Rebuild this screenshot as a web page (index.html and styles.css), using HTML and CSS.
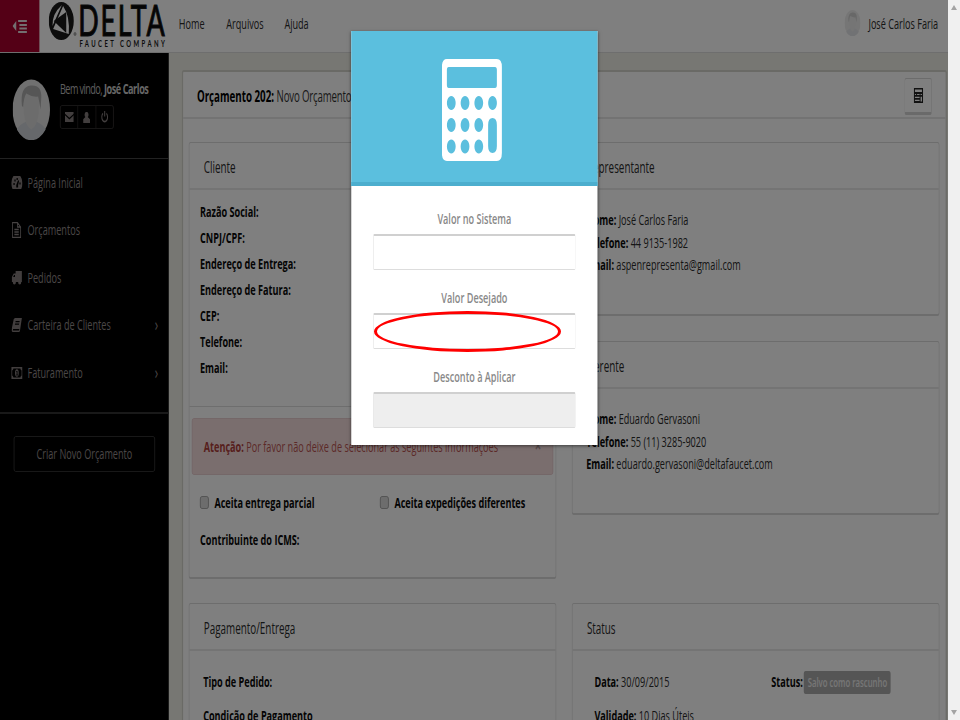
FILE: index.html
```html
<!DOCTYPE html>
<html lang="pt-BR">
<head>
<meta charset="utf-8">
<title>Orçamento 202</title>
<link rel="stylesheet" href="styles.css">
</head>
<body>
<svg class="defs" width="0" height="0">
  <symbol id="person" viewBox="0 0 60 60">
    <circle cx="30" cy="30" r="30" fill="#e0e0e0"/>
    <path d="M7 50q4-5 15-8v-5h16v5q11 3 15 8a30 30 0 0 1-46 0z" fill="#cdd0d6"/>
    <path d="M17 17Q30 8 43 17l-1 17q-3 13-12 16-9-3-12-16z" fill="#d9d9d9"/>
    <path d="M15 26Q12 7 29 6q18-1 17 12l-1 12q-2-7-4-13-9 1-19-3-4 4-5 14z" fill="#adadad"/>
  </symbol>
  <symbol id="calc" viewBox="0 0 96 102">
    <path fill-rule="evenodd" d="M8 0H88Q96 0 96 8V94Q96 102 88 102H8Q0 102 0 94V8Q0 0 8 0zM11 8Q8 8 8 11V26Q8 29 11 29H85Q88 29 88 26V11Q88 8 85 8z
      M15 37a7 7 0 1 0 .1 0z M37 37a7 7 0 1 0 .1 0z M59 37a7 7 0 1 0 .1 0z M81 37a7 7 0 1 0 .1 0z
      M15 59a7 7 0 1 0 .1 0z M37 59a7 7 0 1 0 .1 0z M59 59a7 7 0 1 0 .1 0z
      M15 80.500a7 7 0 1 0 .1 0z M37 80.500a7 7 0 1 0 .1 0z M59 80.500a7 7 0 1 0 .1 0z
      M81 59q-7 0-7 7V87q0 7 7 7t7-7V66q0-7-7-7z" fill="currentColor"/>
  </symbol>
</svg>
<div class="viewport">
<div class="stage">
  <header class="topbar">
    <div class="toggle"><svg width="24" height="14" viewBox="0 0 24 14"><path d="M6 2v10L0 7z M9 1h14v2H9z M11 5h12v2H11z M11 8.500h12v2H11z M9 12h14v2H9z" fill="#e6dfe1"/></svg></div>
    <div class="brand">
      <svg class="mark" width="46" height="40" viewBox="0 0 46 40"><ellipse cx="20" cy="19" rx="20" ry="19" fill="#181818"/><path d="M21 3L6 24Q5 12 21 3z M23 4Q34 14 32 32L7 27z" fill="#fff"/><path d="M8 19L28 10V31z" fill="#181818"/><circle cx="42" cy="32" r="1.500" fill="none" stroke="#333" stroke-width=".7"/></svg>
      <div class="wordmark"><b>DELTA</b><span>FAUCET COMPANY</span></div>
    </div>
    <nav class="menu"><a class="m1">Home</a><a class="m2">Arquivos</a><a>Ajuda</a></nav>
    <div class="account"><svg width="26" height="26" viewBox="0 0 60 60"><use href="#person" width="60" height="60"/></svg><span>José Carlos Faria</span></div>
  </header>
  <div class="columns">
    <aside class="sidebar">
      <div class="profile">
        <svg class="avatar" width="60" height="61" preserveAspectRatio="none"><use href="#person"/></svg>
        <div class="hello">
          <p>Bem vindo, <b>José Carlos</b></p>
          <div class="tools">
            <span><svg width="14" height="10" viewBox="0 0 14 12" preserveAspectRatio="none"><path d="M0 0h14v2L7 7 0 2z M0 4l7 5 7-5v8H0z"/></svg></span>
            <span><svg width="11" height="11" viewBox="0 0 12 12"><path d="M6 0a3 3 0 0 1 2 5.500L12 8v4H0V8l4-2.500A3 3 0 0 1 6 0z"/></svg></span>
            <span><svg width="13" height="12" viewBox="0 0 14 13"><path d="M4 2.500a5 5 0 1 0 6 0M7 0v6" fill="none" stroke="#847c7c" stroke-width="1.800"/></svg></span>
          </div>
        </div>
      </div>
      <ul class="nav">
        <li><svg width="18" height="13" viewBox="0 0 18 13"><path fill-rule="evenodd" d="M2 13A9 9 0 1 1 16 13z M3.500 7v2h2V7z M5 3.500v2h2v-2z M8.500 2v2h2V2z M13 6.500v2h2v-2z M11 4L8 9v2.500h3V9l1.500-4z"/></svg><span>Página Inicial</span></li>
        <li><svg width="18" height="16" viewBox="0 0 18 16"><path d="M2 .7h8l5 4.300v10.300H2z M10 1v4h5 M5 7.500h7M5 10h7M5 12.500h7" fill="none" stroke="#8c8585" stroke-width="1.300"/></svg><span>Orçamentos</span></li>
        <li><svg width="18" height="14" viewBox="0 0 18 14"><path fill-rule="evenodd" d="M7 0h10v11h-1a2.500 2.500 0 0 1-5 0H7.500a2.500 2.500 0 0 1-5 0H1V6l3-3.500h3z M3 6h3V4H4.500z"/></svg><span>Pedidos</span></li>
        <li><svg width="18" height="14" viewBox="0 0 18 14"><path fill-rule="evenodd" d="M6 0h11l-3 12.500L13 14H2Q0 13 1 10L4 1z M7 3l-.4 1.200h6.500l.4-1.200z M6.200 5.500l-.4 1.200h6.500l.4-1.200z M3 11l-.5 1.500h10L13 11z"/></svg><span>Carteira de Clientes</span><i>›</i></li>
        <li><svg width="18" height="12" viewBox="0 0 18 12"><path fill-rule="evenodd" d="M0 0h18v12H0z M3.500 1.500Q3 3 1.500 3.500v5Q3 9 3.500 10.500h11Q15 9 16.500 8.500v-5Q15 3 14.500 1.500z M9 2.300q3 0 3 3.700t-3 3.700-3-3.700 3-3.700z M8 4v1h.6v2.500H8v1h2.600v-1H10V4z"/></svg><span>Faturamento</span><i>›</i></li>
      </ul>
      <div class="create"><a>Criar Novo Orçamento</a></div>
    </aside>
    <main class="content">
      <section class="sheet">
        <div class="sheet-head"><h1>Orçamento 202: <small>Novo Orçamento</small></h1><a class="calc-btn"><svg width="15" height="15" viewBox="0 0 96 102" preserveAspectRatio="none"><path fill-rule="evenodd" d="M0 0H96V102H0z M12 10V28H84V10z M12 40V48H24V40z M34 40V48H60V40z M70 40V48H84V40z M12 60V68H60V60z M70 60V92H84V60z M12 80V88H60V80z" fill="#222"/></svg></a></div>
        <div class="grid">
          <div class="col">
            <article class="card client">
              <h2>Cliente</h2>
              <dl><dt>Razão Social:</dt><dt>CNPJ/CPF:</dt><dt>Endereço de Entrega:</dt><dt>Endereço de Fatura:</dt><dt>CEP:</dt><dt>Telefone:</dt><dt>Email:</dt></dl>
              <div class="extra">
                <div class="alert"><p><b>Atenção:</b> Por favor não deixe de selecionar as seguintes informações</p><em>×</em></div>
                <div class="checks"><label><s></s>Aceita entrega parcial</label><label><s></s>Aceita expedições diferentes</label></div>
                <p class="icms">Contribuinte do ICMS:</p>
              </div>
            </article>
            <article class="card pay"><h2>Pagamento/Entrega</h2><div class="rows"><p><b>Tipo de Pedido:</b></p><p><b>Condição de Pagamento</b></p></div></article>
          </div>
          <div class="col">
            <article class="card rep"><h2>Representante</h2><div class="info"><p><b>Nome:</b> José Carlos Faria</p><p><b>Telefone:</b> 44 9135-1982</p><p><b>Email:</b> aspenrepresenta@gmail.com</p></div></article>
            <article class="card rep second"><h2>Gerente</h2><div class="info"><p><b>Nome:</b> Eduardo Gervasoni</p><p><b>Telefone:</b> 55 (11) 3285-9020</p><p><b>Email:</b> eduardo.gervasoni@deltafaucet.com</p></div></article>
            <article class="card pay state"><h2>Status</h2><div class="rows status"><p class="split"><span><b>Data:</b> 30/09/2015</span><span><b>Status:</b> <mark>Salvo como rascunho</mark></span></p><p><b>Validade:</b> 10 Dias Úteis</p></div></article>
          </div>
        </div>
      </section>
    </main>
  </div>
  <div class="shade"></div>
  <div class="modal">
    <div class="modal-head"><svg width="96" height="102"><use href="#calc"/></svg></div>
    <form class="fields">
      <label><span>Valor no Sistema</span><input></label>
      <label><span>Valor Desejado</span><input></label>
      <label><span>Desconto à Aplicar</span><input disabled></label>
    </form>
  </div>
</div>
<div class="scroll"><b class="up"></b><b class="down"></b></div>
<div class="ring"></div>
</div>
</body>
</html>
```
FILE: styles.css
```css
* { box-sizing: border-box; margin: 0; padding: 0; }
body { font-family: "Open Sans", "Noto Sans", sans-serif; background: #808080; overflow: hidden; }
.defs { position: absolute; }
.viewport { position: relative; width: 960px; height: 720px; overflow: hidden; }

.stage { position: relative; width: 1517px; height: 720px; overflow: hidden; transform: scaleX(.625); transform-origin: 0 0; background: #efefe6; color: #2a2a2a; font-size: 14.6px; white-space: nowrap; }

.topbar { display: flex; height: 53px; background: #fff; border-bottom: 1px solid #dcdcdc; }
.toggle { width: 63px; height: 52px; background: #a8002c; display: flex; align-items: center; justify-content: center; }
.brand { display: flex; width: 223px; padding: 2px 0 0 15px; }
.mark { flex: none; }
.wordmark { display: flex; flex-direction: column; margin-left: 1px; margin-top: -3px; color: #181818; width: 150px; }
.wordmark b { height: 39px; font: 400 43px/42px Lato, sans-serif; -webkit-text-stroke: 1.200px #181818; letter-spacing: 2.900px; }
.wordmark span { font: 700 9.500px/11px Lato, sans-serif; letter-spacing: 3.900px; margin-left: 2px; }
.menu { display: flex; line-height: 47px; }
.m1 { width: 76px; }
.m2 { width: 93px; }
.account { margin-left: auto; display: flex; align-items: center; height: 46px; padding-right: 16px; gap: 12px; }
.account svg { opacity: .55; }

.columns { display: flex; }
.sidebar { width: 270px; height: 667px; background: #000; color: #958d8d; }
.profile { display: flex; height: 106px; padding: 26px 0 0 20px; border-bottom: 1px solid #444; }
.hello { padding-left: 16px; }
.hello p { line-height: 19px; color: #bbb; letter-spacing: -.9px; }
.hello b { color: #ccc; letter-spacing: -.7px; }
.tools { display: flex; margin-top: 7px; width: 86px; height: 24px; border: 1px solid #383434; border-radius: 3px; }
.tools span { flex: 1; display: flex; align-items: center; justify-content: center; border-right: 1px solid #383434; }
.tools span:last-child { border: 0; }
.tools path, .nav path { fill: #847c7c; }
.tools span:last-child path, .nav li:nth-child(2) path { fill: none; }
.nav { height: 255px; list-style: none; border-bottom: 2px solid #333; }
.nav li { display: flex; align-items: center; height: 47.500px; padding: 0 17px 0 18px; gap: 8px; }
.nav span { padding-bottom: 2px; }
.nav i { margin-left: auto; font-style: normal; font-size: 18px; line-height: 20px; padding-bottom: 2px; }
.create { padding: 22px 22px; }
.create a { display: block; width: 226px; height: 36px; line-height: 32px; border: 1px solid #3b3b3b; border-radius: 3px; text-align: center; }

.content { padding: 17px 0 0 21px; }
.sheet { width: 1224px; height: 700px; background: #fff; border: 2px solid #d4d4cc; border-radius: 3px 3px 0 0; }
.sheet-head { display: flex; height: 47px; padding: 6px 22px; justify-content: space-between; border-bottom: 2px solid #e6e6e6; }
h1 { font-size: 15.600px; line-height: 36px; color: #000; font-weight: 700; }
h1 small { font-size: 15.500px; font-weight: 400; color: #333; letter-spacing: -.3px; }
.calc-btn { display: flex; width: 44px; height: 37px; align-items: center; justify-content: center; padding-bottom: 1px; border: 1px solid #d8d8d8; border-bottom: 3px solid #d4d4d4; border-radius: 3px; }
.grid { display: flex; gap: 25px; padding: 23px 0 0 9px; }
.col { width: 588px; }
.card { border: solid #dadada; border-width: 1px 1.600px 2px; border-bottom-color: #dadada; border-radius: 3px; background: #fff; }
h2 { height: 47px; padding-left: 23px; font-size: 15.800px; line-height: 49px; font-weight: 400; border-bottom: 2px solid #e8e8e8; }
b, dt, .checks, .icms { font-weight: 700; color: #080808; }
.client { height: 437px; }
dl { height: 217px; padding: 8px 17px; border-bottom: 1px solid #ddd; line-height: 26px; }
.extra { padding: 11px 4px; }
.alert { display: flex; justify-content: space-between; height: 57px; padding: 0 18px; border: 1px solid #e5c6ca; border-radius: 3px; background: #f5dddd; color: #b95350; line-height: 55px; }
.alert b { color: #ad3c39; }
.alert em { font: 700 18px/52px "Open Sans"; color: #b09999; }
.checks { display: flex; padding: 17px 13px 0; line-height: 20px; }
.checks label { flex: none; width: 288px; display: flex; align-items: center; gap: 9px; }
.checks s { width: 14px; height: 13px; border: 1px solid #999; border-radius: 3px; background: #dadada; }
.icms { padding: 17px 13px; line-height: 20px; }
.pay { height: 180px; margin-top: 24px; }
.state { margin-top: 88px; }
.rows { padding: 13px 22px; line-height: 34px; }
.rows.status { padding-left: 35px; }
.split { display: flex; height: 34px; }
.split span { flex: none; width: 283px; }
mark { display: inline-block; height: 23px; line-height: 23px; padding: 0 6px; border-radius: 3px; background: #aaa; color: #eee; font-size: 12.400px; font-weight: 600; vertical-align: middle; margin: -2px 0 0 -2px; }
.rep { height: 174px; }
.second { margin-top: 25px; }
.info { padding: 18px 22px; line-height: 22.700px; }

.shade { position: absolute; inset: 0; background: rgba(0,0,0,.5); }
.modal { position: absolute; left: 562px; top: 31px; width: 394px; height: 414px; background: #fff; box-shadow: 0 1px 4px rgba(0,0,0,.5); }
.modal-head { height: 155px; padding: 28px 9px 0 0; text-align: center; color: #fff; background: #5bbfde; border-bottom: 4px solid #4caece; }
.fields { padding: 23px 35px; }
.fields label { display: block; height: 79px; text-align: center; color: #888; font-weight: 600; }
.fields span { display: block; height: 25px; line-height: 19px; }
.fields input { display: block; width: 324px; height: 36px; border: 1px solid #ddd; border-width: 1px 1.600px; border-top: 2px solid #d0d0d0; border-radius: 2px; background: #fff; }
.fields input:disabled { background: #eee; }
.scroll { position: absolute; right: 0; top: 0; width: 12px; height: 720px; padding: 5px 3px; background: #f0f0f0; display: flex; flex-direction: column; justify-content: space-between; }
.scroll b { width: 0; height: 0; border: 3px solid transparent; }
.scroll .up { border-top: 0; border-bottom: 5px solid #a3a3a3; }
.scroll .down { border-bottom: 0; border-top: 5px solid #a3a3a3; }
.ring { position: absolute; left: 374px; top: 311px; width: 187px; height: 41px; border: 3px solid #f00; border-radius: 50%; }
```
